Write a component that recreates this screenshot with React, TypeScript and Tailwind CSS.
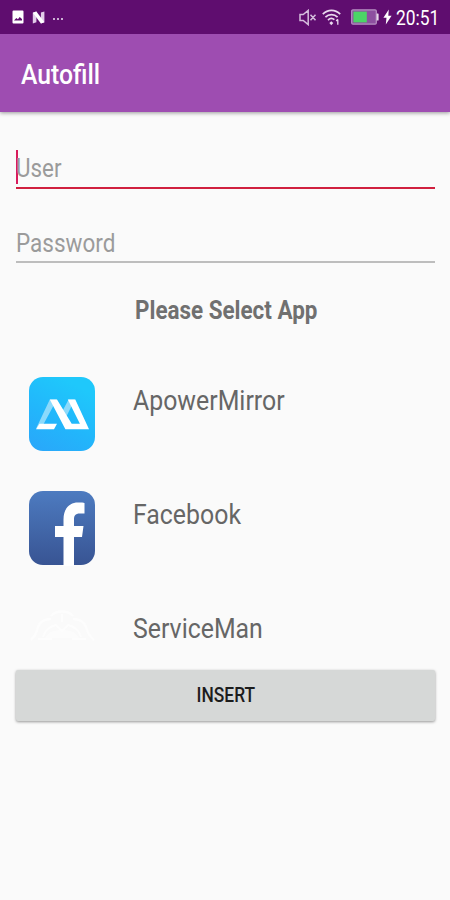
import type { ReactNode } from "react";

function ImageIcon() {
  return (
    <svg width="12" height="14" viewBox="0 0 12 14">
      <path fillRule="evenodd" fill="#fff" d="M1.5 0.5h9a1 1 0 0 1 1 1v11a1 1 0 0 1-1 1h-9a1 1 0 0 1-1-1v-11a1 1 0 0 1 1-1zM2 10.5h8V9L7.7 7 5.9 9.3 4.3 8z" />
    </svg>
  );
}

function NougatIcon() {
  return (
    <svg width="13" height="13" viewBox="0 0 13 13">
      <path fill="#e3cdea" d="M0.8 1.8 4.4 0.4v10.9L0.8 12.6zM8.9 1.6 12.4 0.4v10.8L8.9 12.6z" />
      <path fill="#fff" d="M0.8 1.8 4.4 0.4l8 10.8-3.5 1.4z" />
    </svg>
  );
}

function MuteIcon() {
  return (
    <svg width="18" height="17" viewBox="0 0 18 17" fill="none" stroke="#d5bddd" strokeWidth="1.5">
      <path d="M1 5.6h3.2L9.2 1.4v14.2l-5-4.2H1zM11.5 5.7l5 5.6M16.5 5.7l-5 5.6" />
    </svg>
  );
}

function WifiIcon() {
  return (
    <svg width="19" height="17" viewBox="0 0 19 17" fill="none" stroke="#ead9ef" strokeWidth="1.7">
      <path d="M0.8 5.2C5.8 0.2 13.2 0.2 18.2 5.2M3.4 8.2c3.4-3.4 8.8-3.4 12.2 0M6 11.1c1.9-1.9 4.6-1.9 6.4-.4" />
      <path d="M9.3 12.2l2 1.8-2 2.2-2-2.2z" fill="#ead9ef" stroke="none" />
      <path d="M15.8 10.4v5.4M14.2 12l1.6-1.7" strokeWidth="1.3" />
    </svg>
  );
}

function BatteryIcon() {
  return (
    <svg width="28" height="16" viewBox="0 0 28 16">
      <rect x="0.7" y="0.9" width="24.6" height="14.2" rx="1.2" fill="#8d4fa0" stroke="#b893c4" strokeWidth="1.2" />
      <rect x="2.4" y="2.6" width="13.4" height="10.8" fill="#4bd566" />
      <rect x="25.6" y="4.4" width="2" height="7.2" rx="0.6" fill="#e6d8ea" />
    </svg>
  );
}

function BoltIcon() {
  return (
    <svg width="9" height="16" viewBox="0 0 9 16">
      <path fill="#fff" d="M5.8 0.4 0.4 8.8h3.1L2.8 15.6 8.6 6.7H5.3z" />
    </svg>
  );
}

function ApowerIcon() {
  return (
    <svg width="68" height="76" viewBox="0 0 68 76">
      <defs>
        <linearGradient id="apower" x1="0" y1="1" x2="0.5" y2="0">
          <stop offset="0" stopColor="#2aa6fa" />
          <stop offset="0.5" stopColor="#22b6fb" />
          <stop offset="1" stopColor="#1fc8fb" />
        </linearGradient>
      </defs>
      <rect x="1" y="1" width="66" height="74" rx="14" fill="url(#apower)" />
      <path fill="#8bdafc" d="M21.800 23.400h7L15.500 48.200l-7.500 4.600zM40.600 23.400h6.200L38 41.200l-3.800-5.600z" />
      <path fill="#fff" d="M21.800 23.400h7.200l14.700 24.300h8.200L39.800 23.400h7.500L61 53.200H37.400zM11.500 47.700h17.500L26 53.200H8z" />
    </svg>
  );
}

function FacebookIcon() {
  return (
    <svg width="68" height="76" viewBox="0 0 68 76">
      <defs>
        <linearGradient id="fb" x1="0" y1="0" x2="0" y2="1">
          <stop offset="0" stopColor="#4d7bc0" />
          <stop offset="1" stopColor="#385493" />
        </linearGradient>
      </defs>
      <rect x="1" y="1" width="66" height="74" rx="14" fill="url(#fb)" />
      <path fill="#fff" d="M35.500 76V47H27V36h8.500V29.500c0-11 6-17 14.500-17 3.400 0 5.500.2 6.500.4v10.600h-4.500c-5 0-6 2.500-6 6V36H55.500L54 47h-8v29z" />
    </svg>
  );
}

function ServiceManIcon() {
  return (
    <svg width="68" height="76" viewBox="0 0 68 76" fill="none" stroke="#fff" strokeWidth="2.5" opacity="0.7">
      <path d="M3 36c4-4 5-6 7-13 2-5 6-8 13-8M23 12c5-6 17-6 22 0M45 15c7 0 11 3 13 8 2 7 4 9 8 13" />
      <path d="M15 33c3-9 8-11 13-12l6 6 6-6c5 1 10 3 13 12M34 10v8M10 35h14M44 35h14" strokeWidth="2" />
      <path d="M17 34c3-6 8-8 17-8s14 2 17 8z" fill="#fff" stroke="none" opacity="0.6" />
    </svg>
  );
}

function AppRow({ icon, name }: { icon: ReactNode; name: string }) {
  return (
    <li className="flex h-[114px] shrink-0 items-start">
      <div className="w-[105px] shrink-0">{icon}</div>
      <span className="mt-[8.500px] origin-left scale-x-[0.888] whitespace-nowrap text-[28px] leading-[32px] text-[#666666]">{name}</span>
    </li>
  );
}

export default function App() {
  return (
    <div className="flex h-[900px] w-[450px] flex-col overflow-hidden bg-[#fafafa] font-['Roboto',sans-serif]">
      <header className="shrink-0 bg-[#9e4db1] text-white shadow-[0_1px_4px_rgba(0,0,0,0.4)]">
        <div className="flex h-[34px] items-center bg-[#5f0d6f] pl-[12px]">
          <ImageIcon />
          <div className="ml-[8px]"><NougatIcon /></div>
          <div className="ml-[8px] mt-[4px] flex gap-[2px]">
            <i className="size-[2px] bg-[#cbb0d3]" />
            <i className="size-[2px] bg-[#cbb0d3]" />
            <i className="size-[2px] bg-[#cbb0d3]" />
          </div>
          <div className="ml-auto flex w-[151px] items-center">
            <MuteIcon />
            <div className="ml-[5px]"><WifiIcon /></div>
            <div className="ml-[10px]"><BatteryIcon /></div>
            <div className="ml-[4px]"><BoltIcon /></div>
            <span className="ml-[4px] mt-[2px] origin-left scale-x-[0.87] text-[20px] leading-[24px]">20:51</span>
          </div>
        </div>
        <h1 className="flex h-[78px] items-center pl-[21px] pt-[4px] text-[27px] font-medium leading-[32px]">
          <span className="origin-left scale-x-[0.915]">Autofill</span>
        </h1>
      </header>
      <main className="flex flex-col px-[15px]">
        <div className="ml-[1px] mt-[38px] flex h-[39px] items-start border-b-[2px] border-[#d0203f]">
          <i className="h-[34px] w-[2px] bg-[#d81b5c]" />
          <span className="-ml-[2px] mt-[4px] origin-left scale-x-[0.895] text-[25px] leading-[30px] text-[#9b9b9b]">User</span>
        </div>
        <div className="ml-[1px] mt-[36px] flex h-[38px] items-start border-b-[2px] border-[#bdbdbd]">
          <span className="mt-[4px] origin-left scale-x-[0.9] text-[25px] leading-[30px] text-[#9b9b9b]">Password</span>
        </div>
        <h2 className="ml-[120px] mt-[31px] flex text-[26px] font-bold leading-[32px] text-[#707070]">
          <span className="origin-left scale-x-[0.862] whitespace-nowrap">Please Select App</span>
        </h2>
        <ul className="mt-[50px] flex h-[285px] flex-col overflow-hidden pl-[13px]">
          <AppRow icon={<ApowerIcon />} name="ApowerMirror" />
          <AppRow icon={<FacebookIcon />} name="Facebook" />
          <AppRow icon={<ServiceManIcon />} name="ServiceMan" />
        </ul>
        <button className="ml-[1px] mt-[9px] flex h-[51px] items-center justify-center rounded-[2px] bg-[#d6d8d7] text-[19.500px] font-medium leading-[24px] text-[#1c1c1c] shadow-[0_1px_3px_rgba(0,0,0,0.4)]">
          <span className="mt-[1px] scale-x-[0.89]">INSERT</span>
        </button>
      </main>
    </div>
  );
}
